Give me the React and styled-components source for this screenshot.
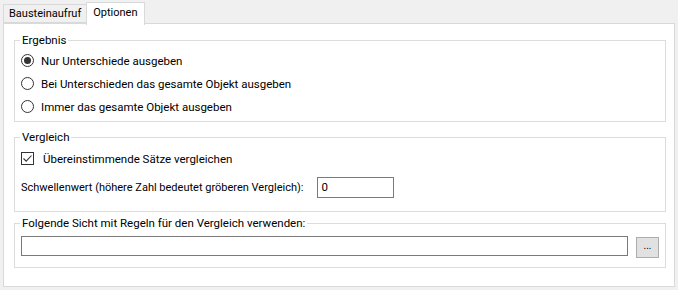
import { useState } from "react";
import styled, { createGlobalStyle } from "styled-components";

const GlobalStyle = createGlobalStyle`
  html, body {
    margin: 0;
    padding: 0;
    background: #f0f0f0;
  }
  body {
    font-family: Roboto, "Liberation Sans", Arial, sans-serif;
    font-size: 11px;
    color: #000;
  }
`

const Window = styled.div`
  width: 678px;
  height: 290px;
  padding: 2px 3px 0 3px;
  box-sizing: border-box;
`

const TabStrip = styled.div`
  display: flex;
  align-items: flex-end;
  height: 21px;
  position: relative;
  z-index: 1;
`

const Tab = styled.div`
  box-sizing: border-box;
  height: ${({ active }) => active ? "23px" : "19px"};
  margin-bottom: ${({ active }) => active ? "-2px" : "0"};
  margin-left: ${({ active }) => active ? "-1px" : "0"};
  padding: ${({ active }) => active ? "2px 6px 0 6px" : "1px 5px 0 5px"};
  background: ${({ active }) => active ? "#fff" : "#f0f0f0"};
  border: 1px solid #d9d9d9;
  border-bottom: ${({ active }) => active ? "none" : "1px solid #d9d9d9"};
  line-height: 16px;
  font-size: 11px;
  white-space: nowrap;
`

const Panel = styled.div`
  box-sizing: border-box;
  width: 672px;
  height: 264px;
  background: #fff;
  border: 1px solid #d9d9d9;
  padding: 0 8px 0 10px;
  display: flex;
  flex-direction: column;
`

const Group = styled.fieldset`
  margin: ${({ top }) => top}px 0 0 0;
  padding: ${({ pad }) => pad};
  border: 1px solid #dcdcdc;
  min-width: 0;
`

const Legend = styled.legend`
  padding: 0 2px;
  margin-left: 5px;
  line-height: 16px;
  font-size: 11.5px;
`

const Row = styled.label`
  display: flex;
  align-items: center;
  height: ${({ h }) => h || 23}px;
  padding-left: 6px;
  gap: ${({ gap }) => gap || 7}px;
  font-size: 11.5px;
  cursor: default;
`

const RadioCircle = styled.span`
  box-sizing: border-box;
  width: 13px;
  height: 13px;
  border-radius: 50%;
  border: 1px solid #333;
  background: #fff;
  display: flex;
  align-items: center;
  justify-content: center;
  &::after {
    content: "";
    width: 7px;
    height: 7px;
    border-radius: 50%;
    background: ${({ checked }) => checked ? "#333" : "transparent"};
  }
`

const CheckBox = styled.span`
  box-sizing: border-box;
  width: 13px;
  height: 13px;
  border: 1px solid #333;
  background: #fff;
  display: flex;
  align-items: center;
  justify-content: center;
`

const TextBox = styled.input`
  box-sizing: border-box;
  height: ${({ h }) => h}px;
  width: ${({ w }) => w ? `${w}px` : "auto"};
  flex: ${({ w }) => w ? "none" : "1"};
  border: 1px solid #7a7a7a;
  padding: 0 3px;
  font: inherit;
  font-size: 11.5px;
  outline: none;
  background: #fff;
`

const FieldRow = styled.div`
  display: flex;
  align-items: center;
  gap: ${({ gap }) => gap}px;
  padding-left: 6px;
  height: ${({ h }) => h}px;
`

const Text = styled.span`
  white-space: nowrap;
`

const BrowseButton = styled.button`
  box-sizing: border-box;
  width: 23px;
  height: 21px;
  margin-top: 2px;
  border: 1px solid #adadad;
  background: #e1e1e1;
  font: inherit;
  font-size: 10px;
  padding: 0 0 3px 0;
  color: #000;
`

const options = [
  "Nur Unterschiede ausgeben",
  "Bei Unterschieden das gesamte Objekt ausgeben",
  "Immer das gesamte Objekt ausgeben",
]

export default function App() {
  const [choice, setChoice] = useState(0)
  const [match, setMatch] = useState(true)

  return (
    <Window>
      <GlobalStyle />
      <TabStrip>
        <Tab>Bausteinaufruf</Tab>
        <Tab active>Optionen</Tab>
      </TabStrip>
      <Panel>
        <Group top={8} pad="1px 0 3px 0">
          <Legend>Ergebnis</Legend>
          {options.map((label, i) => (
            <Row key={label} onClick={() => setChoice(i)}>
              <RadioCircle checked={choice === i} />
              <Text>{label}</Text>
            </Row>
          ))}
        </Group>
        <Group top={7} pad="2px 0 7px 0">
          <Legend>Vergleich</Legend>
          <Row h={23} gap={9} onClick={() => setMatch(!match)}>
            <CheckBox>
              {match && (
                <svg width="11" height="11" viewBox="0 0 11 11">
                  <path d="M1.5 5.5 L4.2 8.2 L9.5 2.5" fill="none" stroke="#333" strokeWidth="1.1" />
                </svg>
              )}
            </CheckBox>
            <Text>Übereinstimmende Sätze vergleichen</Text>
          </Row>
          <FieldRow gap={14} h={34}>
            <Text>Schwellenwert (höhere Zahl bedeutet gröberen Vergleich):</Text>
            <TextBox h={21} w={77} defaultValue="0" />
          </FieldRow>
        </Group>
        <Group top={3} pad="4px 6px 10px 0">
          <Legend>Folgende Sicht mit Regeln für den Vergleich verwenden:</Legend>
          <FieldRow gap={8} h={22}>
            <TextBox h={20} />
            <BrowseButton>...</BrowseButton>
          </FieldRow>
        </Group>
      </Panel>
    </Window>
  )
}
